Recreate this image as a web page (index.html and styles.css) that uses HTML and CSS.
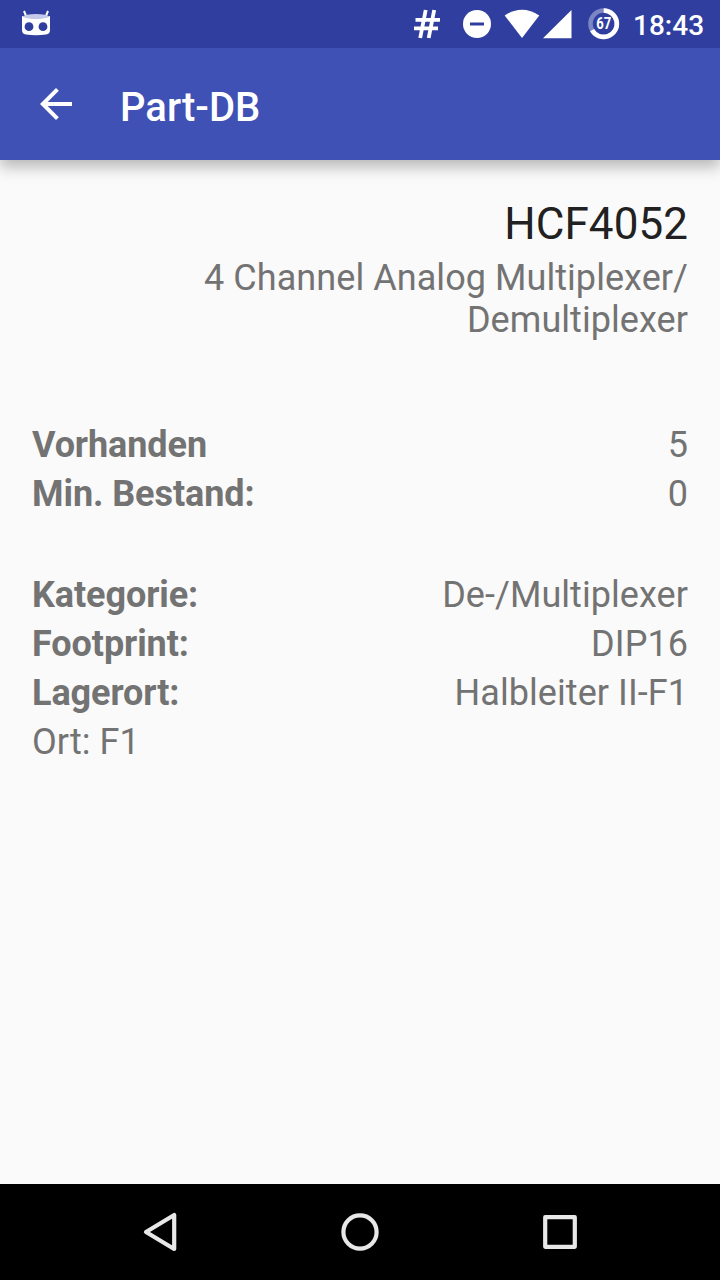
FILE: index.html
```html
<!DOCTYPE html>
<html lang="de">
<head>
    <meta charset="UTF-8">
    <meta name="viewport" content="width=device-width, initial-scale=1.0">
    <title>Part-DB</title>
    <link rel="stylesheet" href="styles.css">
</head>
<body>
    <div class="status-bar">
        <svg class="robot-icon" width="32" height="28" viewBox="0 0 32 28">
            <path d="M4 1l2.500 6M28 1l-2.500 6" stroke="#fff" stroke-width="2"/>
            <path d="M2 6q14 5 28 0v14q0 4-4 4.500-10 1.500-20 0-4-.5-4-4.500z" fill="#fff"/>
            <ellipse cx="16" cy="6.500" rx="12.500" ry="2.600" fill="#c5cae9"/>
            <circle cx="9" cy="16.700" r="4.400" fill="#303f9f"/>
            <circle cx="23" cy="16.700" r="4.400" fill="#303f9f"/>
        </svg>
        <div class="status-icons">
            <svg width="306" height="48" viewBox="414 0 306 48">
                <path d="M425.700 10l-5.500 28M434.200 10l-5.500 28M415.500 19.800H440M413.500 28.300H438" fill="none" stroke="#fff" stroke-width="3.800"/>
                <circle cx="477" cy="24" r="14" fill="#fff"/>
                <path d="M470 24h14" stroke="#303f9f" stroke-width="3"/>
                <path d="M504.700 15.500q17.300-11.500 34.600 0L522 38z" fill="#fff"/>
                <path d="M571.500 10v28.300H543z" fill="#fff"/>
                <circle cx="603.700" cy="23.700" r="13.200" fill="none" stroke="#7b86c4" stroke-width="4.600"/>
                <path d="M603.700 10.500a13.200 13.200 0 1 1-11.600 19.600" fill="none" stroke="#fff" stroke-width="4.600"/>
                <text class="battery" x="596.200" y="29.200" textLength="15" lengthAdjust="spacingAndGlyphs">67</text>
                <text class="clock" x="633" y="35">18:43</text>
            </svg>
        </div>
    </div>
    <header class="toolbar">
        <svg width="32" height="32" viewBox="4 4 16 16">
            <path d="M20 11H7.830l5.590-5.590L12 4l-8 8 8 8 1.410-1.410L7.830 13H20z" fill="#fff"/>
        </svg>
        <h1>Part-DB</h1>
    </header>
    <main class="content">
        <h2>HCF4052</h2>
        <p class="description">4 Channel Analog Multiplexer/<br>Demultiplexer</p>
        <div class="group">
            <div class="row"><b>Vorhanden</b><span>5</span></div>
            <div class="row"><b>Min. Bestand:</b><span>0</span></div>
        </div>
        <div class="group">
            <div class="row"><b>Kategorie:</b><span>De-/Multiplexer</span></div>
            <div class="row"><b>Footprint:</b><span>DIP16</span></div>
            <div class="row"><b>Lagerort:</b><span>Halbleiter II-F1</span></div>
            <div class="row"><span>Ort: F1</span></div>
        </div>
    </main>
    <nav class="nav-bar">
        <svg width="40" height="40" viewBox="0 0 40 40"><path d="M34.200 3v34L6 20z"/></svg>
        <svg width="40" height="40" viewBox="0 0 40 40"><circle cx="20" cy="20" r="16.600"/></svg>
        <svg width="40" height="40" viewBox="0 0 40 40"><rect x="5.200" y="5.200" width="29.600" height="29.600"/></svg>
    </nav>
</body>
</html>
```
FILE: styles.css
```css
body {
    margin: 0;
    height: 1280px;
    display: flex;
    flex-direction: column;
    font-family: Roboto, sans-serif;
    background-color: #fafafa;
    color: #737373;
}
.status-bar {
    height: 48px;
    display: flex;
    align-items: center;
    justify-content: space-between;
    background-color: #303f9f;
}
.robot-icon {
    margin-left: 20px;
}
.status-icons {
    display: flex;
}
.battery {
    font-size: 16px;
    font-weight: bold;
    fill: #fff;
}
.clock {
    font-size: 28px;
    font-weight: 500;
    fill: #fff;
}
.toolbar {
    height: 112px;
    box-sizing: border-box;
    padding-left: 40px;
    display: flex;
    align-items: center;
    gap: 48px;
    background-color: #3f51b5;
    box-shadow: 0 7px 14px rgba(0,0,0,0.27);
    clip-path: inset(0 0 -30px 0);
}
h1 {
    margin: 0;
    padding-top: 6px;
    font-size: 40px;
    font-weight: 500;
    color: #fff;
}
.content {
    flex: 1;
    padding: 32px 32px 0;
    font-size: 36px;
    letter-spacing: 0.06px;
}
h2 {
    margin: 0;
    font-size: 44px;
    font-weight: normal;
    line-height: 65px;
    text-align: right;
    color: #212121;
}
b {
    letter-spacing: -0.08px;
}
.description {
    margin: 0 0 80px;
    line-height: 42px;
    text-align: right;
}
.group {
    margin-bottom: 52px;
}
.row {
    display: flex;
    justify-content: space-between;
    line-height: 49px;
}
.nav-bar {
    height: 96px;
    padding: 0 60px;
    display: flex;
    align-items: center;
    justify-content: space-around;
    background-color: #000;
}
.nav-bar svg {
    fill: none;
    stroke: #e8e8e8;
    stroke-width: 4.200;
    stroke-linejoin: round;
}
```
